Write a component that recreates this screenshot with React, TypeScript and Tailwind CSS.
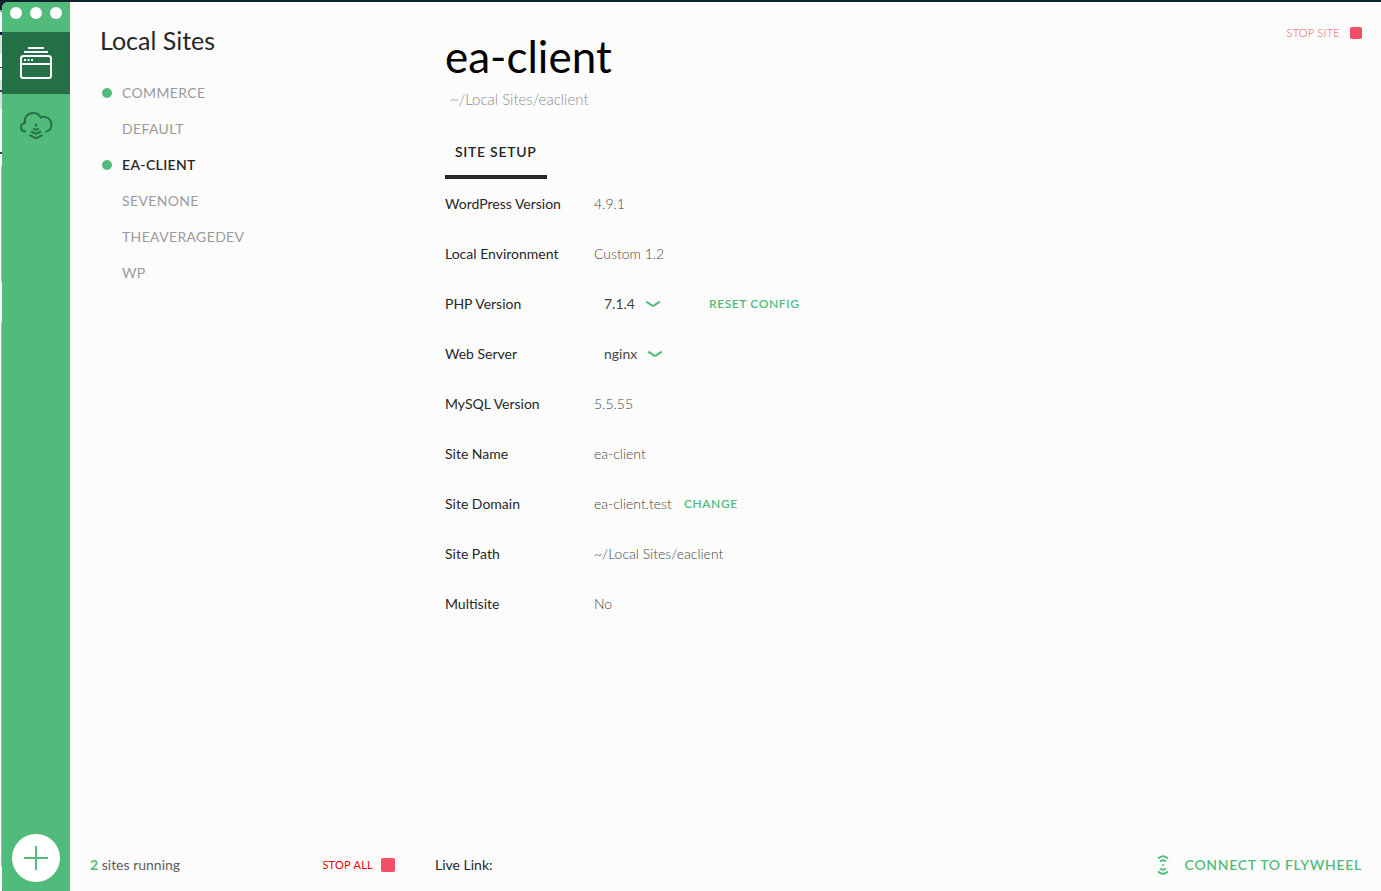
import type { ReactNode } from "react";

const sites = [
  { name: "commerce", running: true },
  { name: "default", running: false },
  { name: "ea-client", running: true, active: true },
  { name: "sevenone", running: false },
  { name: "theaveragedev", running: false },
  { name: "wp", running: false },
];

const edge = [
  { h: 10, c: "#0b242d" },
  { h: 2, c: "#8f9a9e" },
  { h: 20, c: "#ffffff" },
  { h: 3, c: "#1b1b4d" },
  { h: 19, c: "#dedede" },
  { h: 13, c: "#ffffff" },
  { h: 1, c: "#39564b" },
  { h: 12, c: "#ffffff" },
  { h: 10, c: "#dedede" },
  { h: 2, c: "#3a3a3a" },
  { h: 17, c: "#dedede" },
  { h: 43, c: "#ffffff" },
  { h: 2, c: "#3a3a3a" },
];

function SitesIcon() {
  return (
    <svg width="34" height="34" viewBox="0 0 34 34" fill="none" stroke="#fff" strokeWidth="2" aria-hidden="true">
      <path d="M9 2h16M5 6h24" />
      <rect x="2" y="10" width="30" height="22" rx="2.5" />
      <path d="M2 18h30" />
      <path d="M5 14h2M8.500 14h2M12 14h2" />
    </svg>
  );
}

function CloudIcon() {
  return (
    <svg width="34" height="30" viewBox="0 0 34 30" fill="none" stroke="#26734a" strokeWidth="2" aria-hidden="true">
      <path d="M7 21.500C3.500 21.500 2 19.500 2 17.500c0-2.500 1.700-4.200 4-4.500C4.500 7.500 9 3 14 3c3.800 0 6.400 1.700 7.700 4.500C27.500 5 32.500 9.500 32.500 14.500c0 4-2.500 6.800-6 7.200" />
      <circle cx="17" cy="15" r="1.500" fill="#26734a" stroke="none" />
      <path d="M14 18.700l3 1.300 3-1.300M12 21.500l5 2.500 5-2.500M10.500 25l6.500 3.300 6.500-3.300" />
    </svg>
  );
}

function FlywheelIcon() {
  return (
    <svg width="12" height="20" viewBox="0 0 12 20" fill="none" stroke="#51bb7b" strokeWidth="1.700" aria-hidden="true">
      <path d="M1 3.500Q6-1 11 3.500M3 6.500Q6 4 9 6.500M3 13.500Q6 16 9 13.500M1 16.500Q6 21 11 16.500" />
      <circle cx="6" cy="10" r="1" fill="#51bb7b" stroke="none" />
    </svg>
  );
}

function Picker({ id, value }: { id: string; value: string }) {
  return (
    <span className="relative inline-flex items-center">
      <select id={id} defaultValue={value} className="field-sizing-content cursor-pointer appearance-none bg-transparent pr-[26px] pl-2.5 font-normal text-[#454646]">
        <option>{value}</option>
      </select>
      <svg className="pointer-events-none absolute right-0" width="16" height="6" viewBox="0 0 16 6" fill="none" stroke="#51bb7b" strokeWidth="2" aria-hidden="true">
        <path d="M1 1Q3 1.300 5.500 3.500Q8 6 10.500 3.500Q13 1.300 15 1" />
      </svg>
    </span>
  );
}

function Row({ label, htmlFor, children }: { label: string; htmlFor?: string; children: ReactNode }) {
  return (
    <div className="flex h-[50px] items-center">
      <dt className="w-[149px] shrink-0 text-[#262727]">
        {htmlFor ? <label htmlFor={htmlFor}>{label}</label> : label}
      </dt>
      <dd className="flex items-center font-light text-[#454646]">{children}</dd>
    </div>
  );
}

export default function App() {
  return (
    <div className="flex min-h-screen bg-[#0b242d] font-['Lato',sans-serif] text-sm leading-5">
      <div className="flex w-0.5 shrink-0 flex-col bg-white" aria-hidden="true">
        {edge.map((e, i) => (
          <div key={i} style={{ height: e.h, backgroundColor: e.c }} />
        ))}
        <div className="mt-3 h-[116px] border-r border-[#b5b5b5]" />
        <div className="mt-10 mb-6 grow border-r border-[#b5b5b5]" />
      </div>
      <div className="mt-0.5 flex grow overflow-hidden rounded-tl-md rounded-bl-xs bg-[#fcfcfc]">
        <nav className="flex w-[68px] shrink-0 flex-col bg-[#51bb7b]" aria-label="Main">
          <div className="flex h-[30px] justify-center gap-2 pt-[5px]">
            <button aria-label="Close" className="size-3 rounded-full bg-white" />
            <button aria-label="Minimize" className="size-3 rounded-full bg-white" />
            <button aria-label="Zoom" className="size-3 rounded-full bg-white" />
          </div>
          <button aria-label="Local Sites" className="flex h-[62px] items-center justify-center bg-[#267048]">
            <SitesIcon />
          </button>
          <button aria-label="Flywheel" className="flex h-[62px] items-center justify-center">
            <CloudIcon />
          </button>
          <button aria-label="Add site" className="mx-auto mt-auto mb-[9px] flex size-12 items-center justify-center rounded-full bg-white">
            <svg width="26" height="26" viewBox="0 0 26 26" stroke="#51bb7b" strokeWidth="2" aria-hidden="true">
              <path d="M13 1v24M1 13h24" />
            </svg>
          </button>
        </nav>

        <aside className="flex w-[345px] shrink-0 flex-col">
          <h2 className="mt-[23px] ml-[30px] text-[25px] leading-[30px] text-[#262727]">Local Sites</h2>
          <ul className="mt-5 ml-8 tracking-wide uppercase">
            {sites.map((s) => (
              <li key={s.name}>
                <a href="#" className="flex h-9 items-center gap-2.5">
                  <span className={s.running ? "size-2.5 rounded-full bg-[#51bb7b]" : "size-2.5"} />
                  <span className={s.active ? "font-semibold text-[#262727]" : "text-[#9b9b9b]"}>{s.name}</span>
                </a>
              </li>
            ))}
          </ul>
          <div className="mt-auto flex h-[52px] items-center justify-between px-5">
            <span className="text-[#5d5e5e]">
              <b className="text-[#51bb7b]">2</b> sites running
            </span>
            <button className="flex items-center gap-2 text-[11px] tracking-wide text-[#f00000]">
              STOP ALL
              <span className="size-3.5 rounded-xs bg-[#f14f65]" />
            </button>
          </div>
        </aside>

        <main className="flex grow flex-col">
          <header className="flex items-start justify-between pt-7 pr-[19px] pl-[30px]">
            <div>
              <h1 className="text-[44px] leading-[52px] text-black">ea-client</h1>
              <p className="mt-[7px] pl-[5px] text-[15px] leading-5 font-light text-[#8f8f8f]">~/Local Sites/eaclient</p>
            </div>
            <button className="-mt-[7px] flex items-center gap-2.5 text-[11px] font-light tracking-wide text-[#f14f65]">
              STOP SITE
              <span className="size-3 rounded-xs bg-[#f14f65]" />
            </button>
          </header>
          <div className="mt-[33px] flex px-[30px]">
            <button className="border-b-4 border-[#262727] px-2.5 pb-[13px] font-semibold tracking-wider text-[#262727]">SITE SETUP</button>
          </div>
          <dl className="px-[30px]">
            <Row label="WordPress Version">4.9.1</Row>
            <Row label="Local Environment">Custom 1.2</Row>
            <Row label="PHP Version" htmlFor="php">
              <Picker id="php" value="7.1.4" />
              <button className="ml-12 text-xs font-semibold tracking-wider text-[#51bb7b]">RESET CONFIG</button>
            </Row>
            <Row label="Web Server" htmlFor="server">
              <Picker id="server" value="nginx" />
            </Row>
            <Row label="MySQL Version">5.5.55</Row>
            <Row label="Site Name">ea-client</Row>
            <Row label="Site Domain">
              ea-client.test
              <button className="ml-3 text-xs font-semibold tracking-wider text-[#51bb7b]">CHANGE</button>
            </Row>
            <Row label="Site Path">~/Local Sites/eaclient</Row>
            <Row label="Multisite">No</Row>
          </dl>
          <footer className="mt-auto flex h-[52px] items-center justify-between pr-[19px] pl-5">
            <span className="text-[#262727]">Live Link:</span>
            <button className="flex items-center gap-4 font-semibold tracking-wider text-[#51bb7b]">
              <FlywheelIcon />
              CONNECT TO FLYWHEEL
            </button>
          </footer>
        </main>
      </div>
    </div>
  );
}
